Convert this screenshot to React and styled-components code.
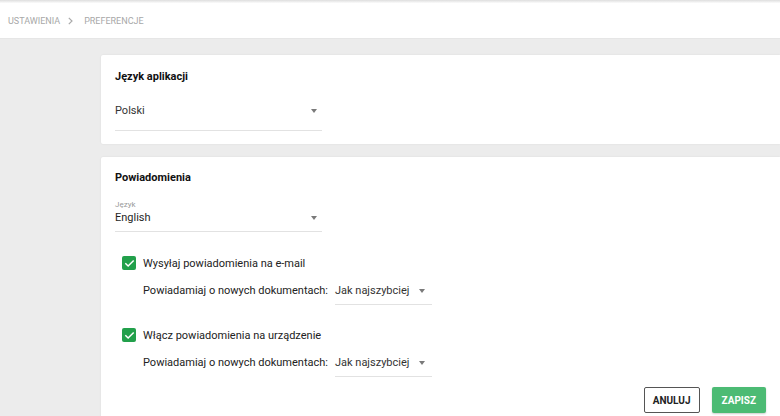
import React from "react";
import styled, { createGlobalStyle } from "styled-components";

const Global = createGlobalStyle`
  html, body { margin: 0; padding: 0; }
  body {
    font-family: Roboto, "Liberation Sans", Arial, sans-serif;
    background: #ececec;
    color: #212121;
    width: 780px;
    height: 416px;
    overflow: hidden;
  }
`;

const Page = styled.div`
  display: flex;
  flex-direction: column;
  height: 416px;
  overflow: hidden;
`;

const TopShade = styled.div`
  flex-shrink: 0;
  height: 3px;
  background: linear-gradient(#dedede, #fbfbfb);
`;

const Header = styled.div`
  flex-shrink: 0;
  height: 36px;
  background: #fff;
  display: flex;
  align-items: center;
  padding-left: 8px;
  font-size: 9px;
  color: #a8a8a8;
  text-transform: uppercase;
  border-bottom: 1px solid #e6e6e6;
  box-sizing: border-box;
`;

const Crumb = styled.span`
  line-height: 12px;
`;

const CrumbSep = styled.span`
  display: inline-flex;
  margin: 0 11px 0 8px;
`;

const Content = styled.div`
  flex-shrink: 0;
  padding: 16px 0 0 101px;
  display: flex;
  flex-direction: column;
  gap: 13px;
`;

const Card = styled.section`
  flex-shrink: 0;
  background: #fff;
  border-radius: 2px 0 0 2px;
  box-shadow: 0 0 2px rgba(0, 0, 0, 0.08);
  padding: ${(p) => p.$pad};
  display: flex;
  flex-direction: column;
  min-height: ${(p) => p.$h};
  box-sizing: border-box;
`;

const Title = styled.h2`
  margin: 0;
  font-size: 11px;
  font-weight: 700;
  color: #111;
  line-height: 16px;
`;

const Select = styled.div`
  width: ${(p) => p.$w}px;
  border-bottom: 1px solid #e2e2e2;
  display: flex;
  flex-direction: column;
  margin-top: ${(p) => p.$mt || 0}px;
  box-sizing: border-box;
  flex-shrink: 0;
`;

const SmallLabel = styled.span`
  font-size: 8px;
  color: #9a9a9a;
  line-height: 10px;
`;

const SelectRow = styled.div`
  display: flex;
  align-items: center;
  justify-content: space-between;
  line-height: 16px;
  padding: ${(p) => p.$pt || 0}px ${(p) => p.$pr || 5}px ${(p) => p.$pb || 0}px 0;
  font-size: 11px;
  white-space: nowrap;
  color: ${(p) => p.$c || "#333"};
`;

const Caret = styled.span`
  width: 0;
  height: 0;
  border-left: 3.5px solid transparent;
  border-right: 3.5px solid transparent;
  border-top: 4px solid #7a7a7a;
`;

const CheckRow = styled.label`
  display: flex;
  align-items: center;
  gap: 7px;
  margin-left: 7px;
  font-size: 11px;
  color: #222;
  margin-top: ${(p) => p.$mt}px;
  height: 16px;
  white-space: nowrap;
`;

const Box = styled.span`
  width: 14px;
  height: 14px;
  border-radius: 2px;
  background: #22a04b;
  display: inline-flex;
  align-items: center;
  justify-content: center;
  flex-shrink: 0;
`;

const SubRow = styled.div`
  display: flex;
  align-items: flex-start;
  margin-left: 28px;
  margin-top: ${(p) => p.$mt}px;
  font-size: 11px;
  color: #222;
  gap: 7px;
`;

const SubLabel = styled.span`
  line-height: 16px;
  white-space: nowrap;
`;

const Actions = styled.div`
  display: flex;
  justify-content: flex-end;
  gap: 12px;
  margin-top: ${(p) => p.$mt}px;
`;

const Button = styled.button`
  height: 26px;
  box-sizing: border-box;
  padding: 0 ${(p) => p.$px}px;
  font-family: Roboto, "Liberation Sans", Arial, sans-serif;
  font-size: 10px;
  font-weight: 700;
  border-radius: 2px;
  cursor: pointer;
  border: ${(p) => (p.$primary ? "none" : "1px solid #555")};
  background: ${(p) => (p.$primary ? "#4cbb74" : "#fff")};
  color: ${(p) => (p.$primary ? "#fff" : "#222")};
  box-shadow: ${(p) => (p.$primary ? "0 1px 2px rgba(0,0,0,0.2)" : "none")};
`;

const Check = () => (
  <Box>
    <svg width="11" height="11" viewBox="0 0 24 24" fill="none" stroke="#fff" strokeWidth="3.2" strokeLinecap="square">
      <path d="M4 12.5l5 5L20 6.5" />
    </svg>
  </Box>
);

const Chevron = () => (
  <svg width="5" height="8" viewBox="0 0 5 8" fill="none" stroke="#aaa" strokeWidth="1.2">
    <path d="M0.8 0.8L4 4L0.8 7.2" />
  </svg>
);

const Dropdown = ({ w, value, mt, label, pt, pb, pr, c }) => (
  <Select $w={w} $mt={mt}>
    {label && <SmallLabel>{label}</SmallLabel>}
    <SelectRow $pt={pt} $pb={pb} $pr={pr} $c={c}>
      <span>{value}</span>
      <Caret />
    </SelectRow>
  </Select>
);

export default function App() {
  return (
    <Page>
      <Global />
      <TopShade />
      <Header>
        <Crumb>Ustawienia</Crumb>
        <CrumbSep>
          <Chevron />
        </CrumbSep>
        <Crumb>Preferencje</Crumb>
      </Header>
      <Content>
        <Card $pad="14px 14px 13px 14px" $h="89px">
          <Title>Język aplikacji</Title>
          <Dropdown w={207} mt={12} pt={6} pb={11} pr={5} value="Polski" />
        </Card>
        <Card $pad="13px 14px 20px 14px" $h="270px">
          <Title>Powiadomienia</Title>
          <Dropdown w={207} mt={14} pb={5} pr={5} label="Język" value="English" c="#1f1f1f" />
          <CheckRow $mt={23}>
            <Check />
            Wysyłaj powiadomienia na e-mail
          </CheckRow>
          <SubRow $mt={12}>
            <SubLabel>Powiadamiaj o nowych dokumentach:</SubLabel>
            <Dropdown w={97} pb={5} pr={7} value="Jak najszybciej" />
          </SubRow>
          <CheckRow $mt={22}>
            <Check />
            Włącz powiadomienia na urządzenie
          </CheckRow>
          <SubRow $mt={12}>
            <SubLabel>Powiadamiaj o nowych dokumentach:</SubLabel>
            <Dropdown w={97} pb={5} pr={7} value="Jak najszybciej" />
          </SubRow>
          <Actions $mt={10}>
            <Button $px={8}>ANULUJ</Button>
            <Button $primary $px={10}>ZAPISZ</Button>
          </Actions>
        </Card>
      </Content>
    </Page>
  );
}
